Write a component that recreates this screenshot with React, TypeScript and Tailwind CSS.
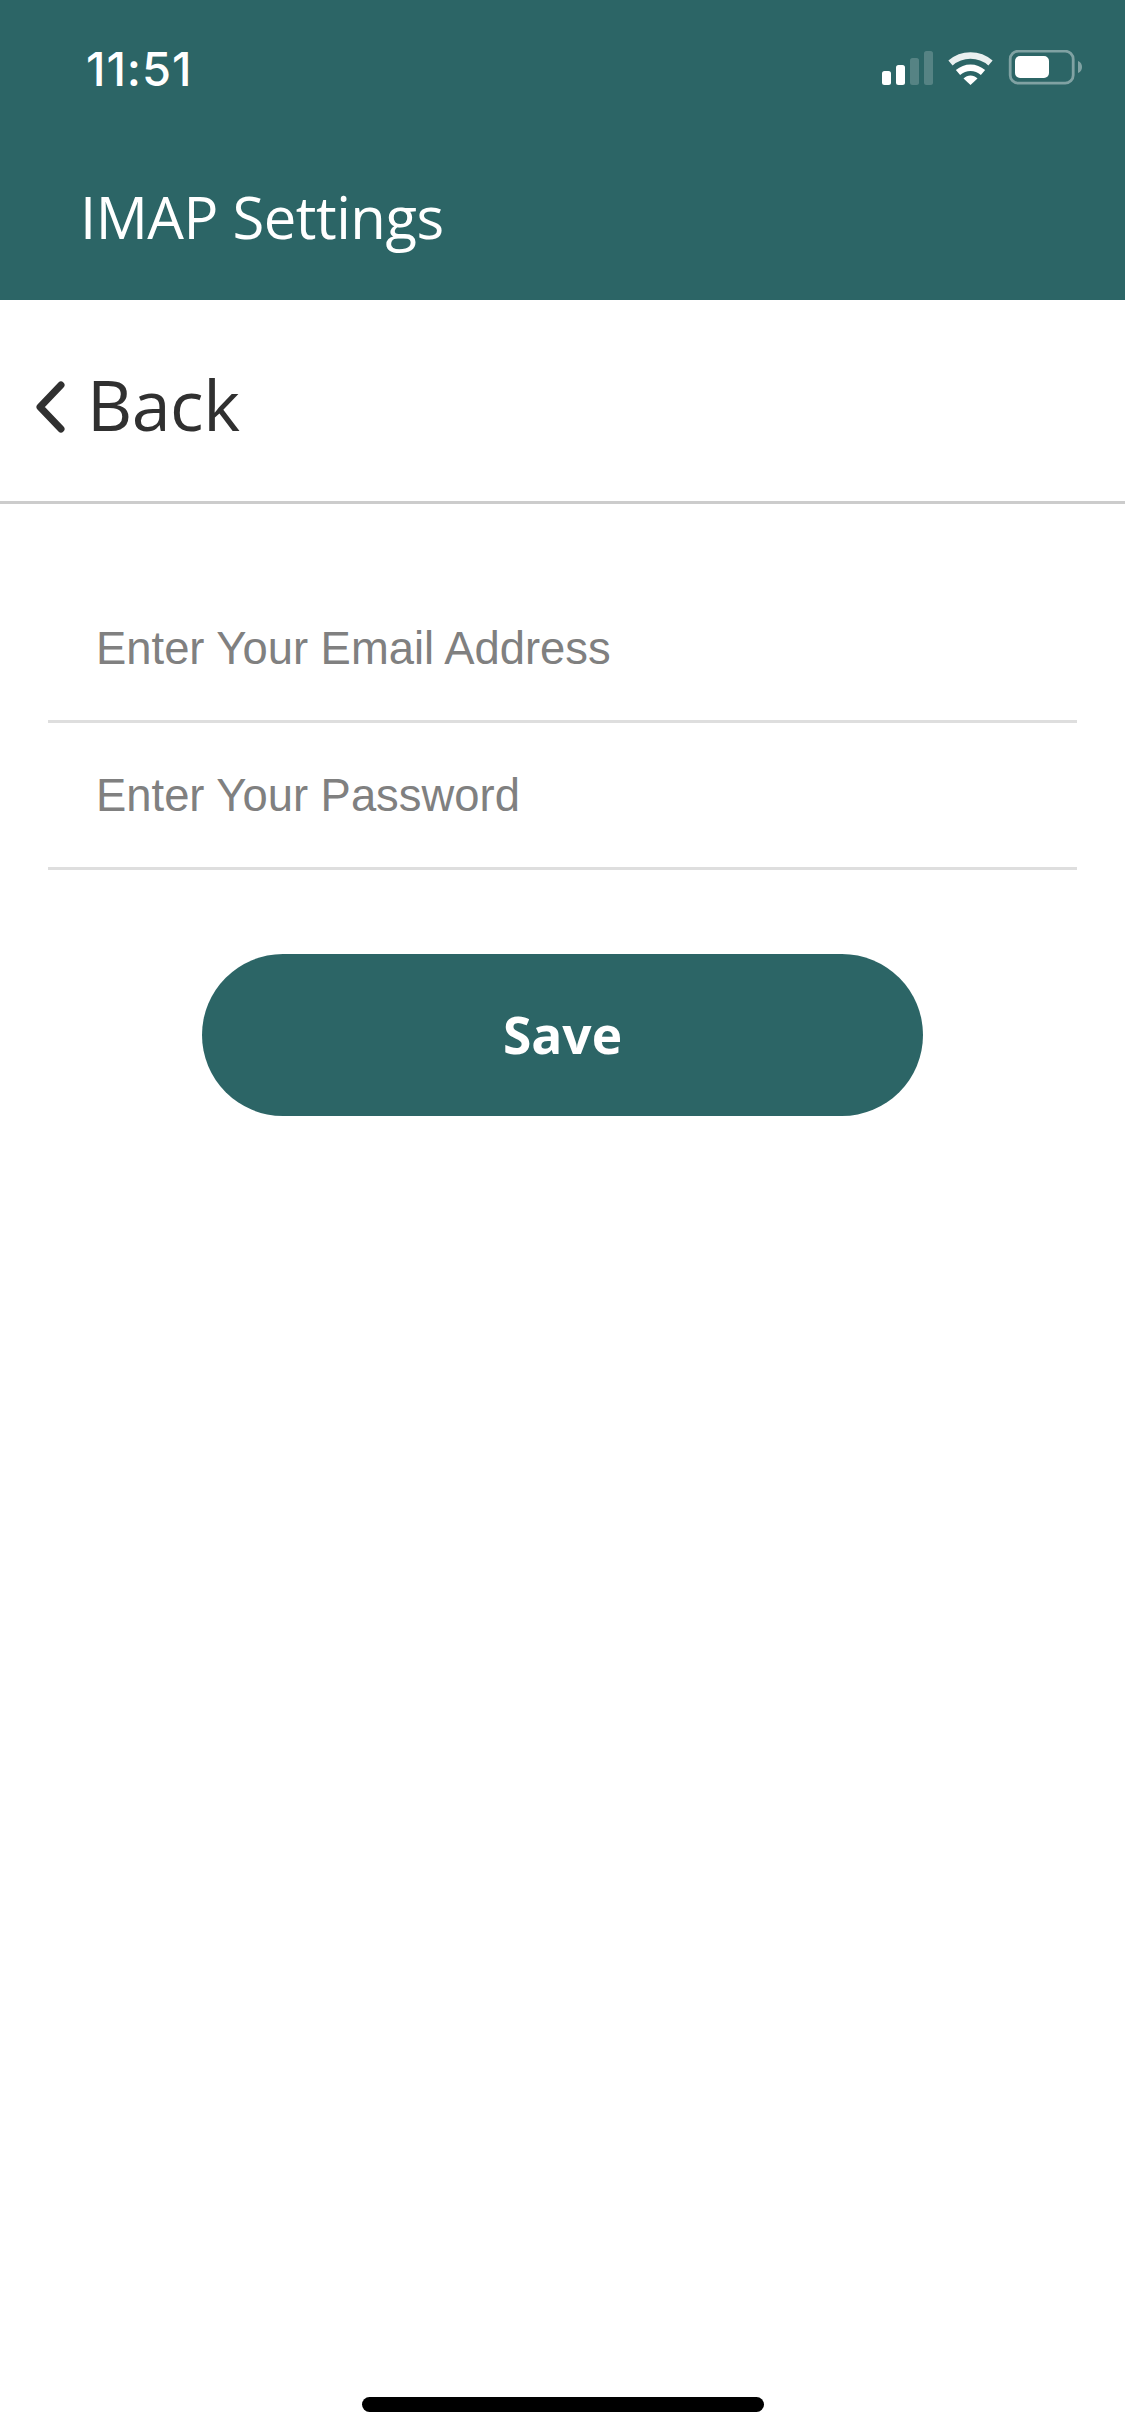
export default function App() {
  return (
    <div className="flex h-[2436px] w-[1125px] flex-col overflow-hidden bg-white font-['Open_Sans',sans-serif]">
      <header className="flex h-[300px] shrink-0 flex-col bg-[#2c6566] text-white">
        <div className="flex h-[176px] shrink-0 items-start justify-between">
          <span className="ml-[86px] mt-[44px] font-['Inter',sans-serif] text-[47px] font-medium leading-[50px] tracking-[0.9px]">11:51</span>
          <svg className="mr-[41px] mt-[50px]" width="202" height="38" viewBox="0 0 202 38" fill="none">
            <rect x="0" y="21" width="9" height="14" rx="2.5" fill="#fff" />
            <rect x="14" y="15" width="9" height="20" rx="2.5" fill="#fff" />
            <rect x="28" y="8" width="9" height="27" rx="2.5" fill="#fff" fillOpacity="0.2" />
            <rect x="42" y="1" width="9" height="34" rx="2.5" fill="#fff" fillOpacity="0.2" />
            <path d="M68.500 13C80 3 97 3 108.500 13" stroke="#fff" strokeOpacity="0.9" strokeWidth="6.5" />
            <path d="M76 22.500C83.500 16 93.500 16 101 22.500" stroke="#fff" strokeWidth="6.5" />
            <path d="M81.500 28.500C85.500 24.500 91.500 24.500 95.500 28.500L88.500 35Z" fill="#fff" />
            <rect x="128.200" y="1.200" width="63" height="32" rx="8" stroke="#fff" strokeOpacity="0.4" strokeWidth="2.800" />
            <rect x="133" y="6" width="34" height="22" rx="5" fill="#fff" />
            <path d="M196 11C199 12 200 14.500 200 17C200 19.500 199 22 196 23Z" fill="#fff" fillOpacity="0.4" />
          </svg>
        </div>
        <h1 className="ml-[80px] text-[58px] font-normal leading-[82px] tracking-[-0.5px]">IMAP Settings</h1>
      </header>
      <div className="flex h-[204px] shrink-0 items-center gap-[22px] border-b-[3px] border-[#cccccc] pl-[35px] pt-[6px] text-[#303030]">
        <svg className="mt-[6px]" width="30" height="52" viewBox="0 0 30 52" fill="none">
          <path d="M26 4L5 26L26 48" stroke="#303030" strokeWidth="7" strokeLinecap="round" strokeLinejoin="round" />
        </svg>
        <span className="text-[70px] font-normal leading-[100px] tracking-[-0.5px]">Back</span>
      </div>
      <form className="flex flex-col px-[48px] pt-[72px] font-['Liberation_Sans',sans-serif]">
        <input
          className="h-[147px] w-full border-b-[3px] border-[#dedede] pl-[48px] pt-[2px] text-[45.4px] text-[#808080] outline-none placeholder:text-[#808080]"
          placeholder="Enter Your Email Address"
        />
        <input
          className="h-[147px] w-full border-b-[3px] border-[#dedede] pl-[48px] pt-[2px] text-[45.4px] text-[#808080] outline-none placeholder:text-[#808080]"
          placeholder="Enter Your Password"
        />
      </form>
      <button className="mx-auto mt-[84px] h-[162px] w-[721px] shrink-0 rounded-full bg-[#2c6566] text-[51.5px] font-bold text-white">
        Save
      </button>
      <div className="mx-auto mb-[24px] mt-auto h-[15px] w-[402px] shrink-0 rounded-full bg-black" />
    </div>
  );
}
